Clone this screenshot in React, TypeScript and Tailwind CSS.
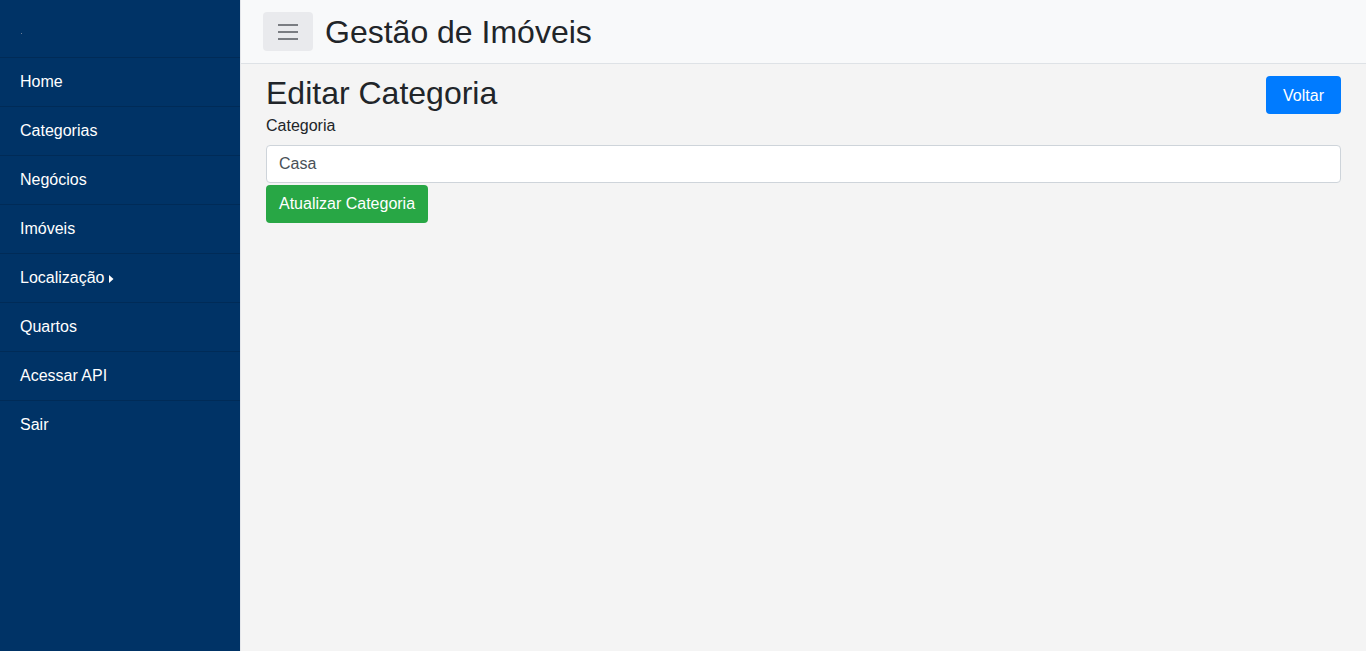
import React from "react";

const items = ["Home", "Categorias", "Negócios", "Imóveis", "Localização", "Quartos", "Acessar API", "Sair"];

export default function App() {
  return (
    <div className="flex h-[651px] w-full overflow-hidden bg-[#f4f4f4] font-['Liberation_Sans',Arial,sans-serif] text-[#212529]">
      <aside className="w-[240px] shrink-0 bg-[#003366] text-white">
        <div className="flex h-[58px] items-center border-b border-[#002b57] px-[21px]">
          <span className="mt-[9px] block h-px w-px bg-[#6b7f99]" />
        </div>
        <ul>
          {items.map((it, i) => (
            <li
              key={it}
              className={
                i === items.length - 1
                  ? "flex h-[48px] items-center px-5 text-base leading-6"
                  : "flex h-[49px] items-center border-b border-[#002b57] px-5 text-base leading-6"
              }
            >
              <span>{it}</span>
              {it === "Localização" && (
                <svg className="ml-[4px] mt-[1px]" width="5" height="8" viewBox="0 0 5 8">
                  <path d="M0 0 L4.5 4 L0 8 Z" fill="white" />
                </svg>
              )}
            </li>
          ))}
        </ul>
      </aside>
      <main className="flex min-w-0 flex-1 flex-col border-l border-[#e4e6ea]">
        <header className="flex h-[64px] shrink-0 items-center border-b border-[#dee2e6] bg-[#f8f9fa] pl-[22px]">
          <button className="flex h-[39px] w-[50px] flex-col items-center justify-center gap-[5px] rounded-[4px] bg-[#e9eaed]">
            <span className="block h-[2px] w-[20px] bg-[#7a7d82]" />
            <span className="block h-[2px] w-[20px] bg-[#7a7d82]" />
            <span className="block h-[2px] w-[20px] bg-[#7a7d82]" />
          </button>
          <h1 className="ml-[12px] text-[32px] leading-[38px] text-[#212529]">Gestão de Imóveis</h1>
        </header>
        <section className="px-[25px] pt-[10px]">
          <div className="flex h-[38px] items-start justify-between">
            <h2 className="text-[32px] font-normal leading-[38px]">Editar Categoria</h2>
            <button className="mt-[2px] h-[38px] rounded-[4px] bg-[#007bff] px-[17px] pt-[2px] text-base text-white">Voltar</button>
          </div>
          <label className="mt-[2px] block text-base leading-6">Categoria</label>
          <div className="mt-[7px] flex h-[38px] items-center rounded-[4px] border border-[#ced4da] bg-white px-3 text-base text-[#495057]">
            Casa
          </div>
          <button className="mt-[2px] h-[38px] rounded-[4px] bg-[#28a745] px-[13px] text-base text-white">Atualizar Categoria</button>
        </section>
      </main>
    </div>
  );
}
